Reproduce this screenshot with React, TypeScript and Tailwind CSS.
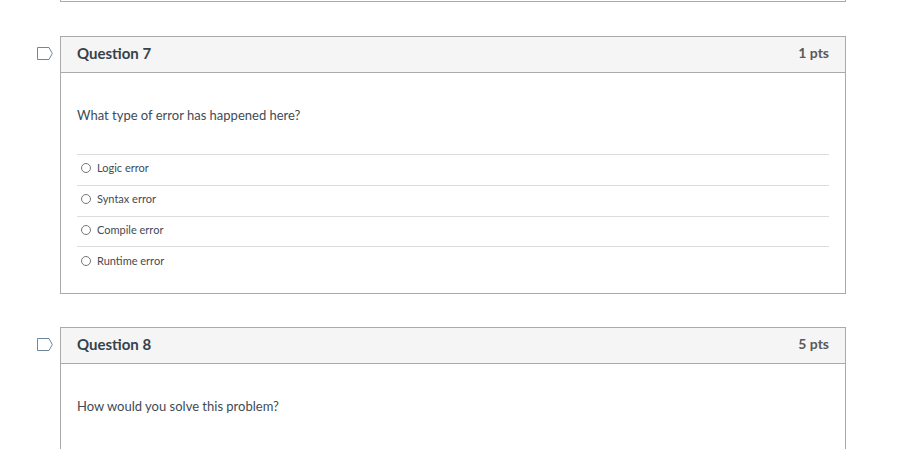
type Question = { id: number; points: number; prompt: string; answers: string[] };

const questions: Question[] = [
  {
    id: 7,
    points: 1,
    prompt: 'What type of error has happened here?',
    answers: ['Logic error', 'Syntax error', 'Compile error', 'Runtime error'],
  },
  { id: 8, points: 5, prompt: 'How would you solve this problem?', answers: [] },
];

function FlagButton({ id }: { id: number }) {
  return (
    <button type="button" aria-label={`Flag question ${id}`} className="mt-[11px] h-[13px] w-4 shrink-0">
      <svg viewBox="0 0 16 13" className="block h-[13px] w-4" fill="#fff" stroke="#6f8799">
        <path d="M0.5 0.5H12L15.3 6.5L12 12.5H0.5Z" />
      </svg>
    </button>
  );
}

function QuestionCard({ question }: { question: Question }) {
  const { id, points, prompt, answers } = question;
  return (
    <div className="flex items-start gap-[7px]">
      <FlagButton id={id} />
      <section className="min-w-0 flex-1 border border-[#aaa] bg-white">
        <header className="flex h-9 items-center justify-between border-b border-[#aaa] bg-[#f5f5f5] px-4 pb-[3px] font-bold">
          <h2 className="text-[15px] leading-5 text-[#35424b]">Question {id}</h2>
          <span className="text-[14px] leading-5 text-[#595959]">{points} pts</span>
        </header>
        <div className="px-4 pt-8 pb-4">
          <p id={`prompt-${id}`} className="text-[13px] leading-5 text-[#3f4b54]">
            {prompt}
          </p>
          {answers.length > 0 ? (
            <div role="radiogroup" aria-labelledby={`prompt-${id}`} className="mt-[29px] grid min-h-[123px] auto-rows-fr">
              {answers.map((answer) => (
                <label key={answer} className="flex items-center gap-[6px] border-t border-[#ddd] pb-[3px] pl-1 text-[11px] leading-4 text-[#3f4b54]">
                  <input
                    type="radio"
                    name={`question-${id}`}
                    className="size-[10px] appearance-none rounded-full border border-[#767676] bg-white checked:bg-[#2d3b45]"
                  />
                  {answer}
                </label>
              ))}
            </div>
          ) : (
            <div className="h-24" />
          )}
        </div>
      </section>
    </div>
  );
}

export default function App() {
  return (
    <main className="h-screen overflow-hidden bg-white pr-[53px] pl-[37px] font-['Lato','Liberation_Sans',sans-serif]">
      <div className="ml-[23px] h-[2px] border-x border-b border-[#aaa]" />
      <div className="mt-[34px] flex flex-col gap-[33px]">
        {questions.map((question) => (
          <QuestionCard key={question.id} question={question} />
        ))}
      </div>
    </main>
  );
}
